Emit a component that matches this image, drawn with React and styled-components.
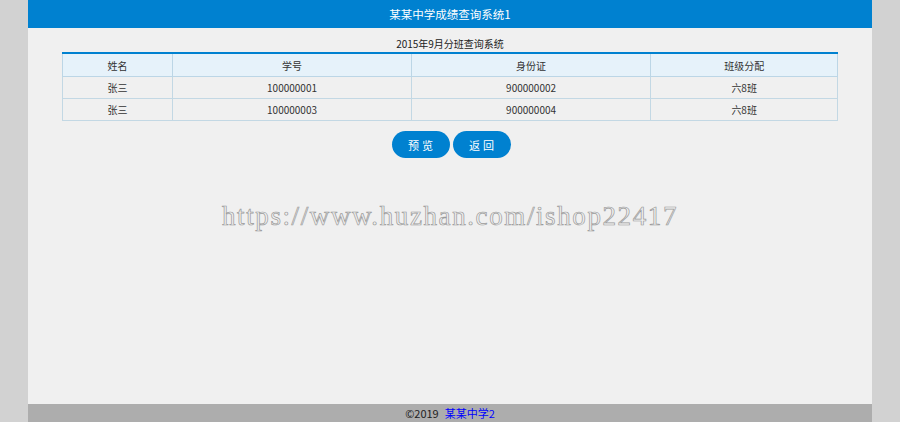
import React from "react";
import styled, { createGlobalStyle } from "styled-components";

const GlobalStyle = createGlobalStyle`
  html, body {
    margin: 0;
    padding: 0;
    height: 100%;
    background: #d2d2d2;
    font-family: "Noto Sans CJK SC", "Noto Sans", sans-serif;
  }
  #root {
    height: 100%;
  }
`;

const Page = styled.div`
  width: 844px;
  height: 100%;
  margin: 0 auto;
  background: #f0f0f0;
  display: flex;
  flex-direction: column;
`;

const Header = styled.div`
  height: 28px;
  background: #0081d0;
  color: #fff;
  font-size: 11.5px;
  display: flex;
  align-items: center;
  justify-content: center;
`;

const Main = styled.div`
  flex: 1;
  padding: 8px 34px 0;
  display: flex;
  flex-direction: column;
  align-items: center;
`;

const Caption = styled.div`
  font-size: 10px;
  line-height: 16px;
  color: #222;
`;

const Table = styled.table`
  width: 776px;
  border-collapse: collapse;
  border-top: 2px solid #0081d0;
  font-size: 10px;
  color: #333;
`;

const Th = styled.th`
  height: 22px;
  padding: 0;
  font-weight: normal;
  background: #e6f2fa;
  border: 1px solid #bcd6e6;
  border-top: none;
  width: ${(p) => p.w}px;
`;

const Td = styled.td`
  height: 21px;
  padding: 0;
  text-align: center;
  border: 1px solid #c3d8e4;
`;

const Actions = styled.div`
  display: flex;
  gap: 3px;
  margin-top: 10px;
  padding-left: 2px;
`;

const Button = styled.button`
  width: 58px;
  height: 27px;
  border: none;
  border-radius: 14px;
  background: #0081d0;
  color: #fff;
  font-family: inherit;
  font-size: 11px;
  letter-spacing: 3px;
  text-indent: 3px;
  cursor: pointer;
`;

const Mark = styled.div`
  margin-top: 40px;
  font-family: "Liberation Serif", serif;
  font-size: 27px;
  line-height: 36px;
  color: transparent;
  -webkit-text-stroke: 0.7px #9a9a9a;
  letter-spacing: 1.6px;
  white-space: nowrap;
`;

const Footer = styled.div`
  height: 18px;
  background: #adadad;
  font-size: 11px;
  color: #222;
  display: flex;
  align-items: center;
  justify-content: center;
  gap: 6px;

  a {
    color: #0000ff;
    text-decoration: none;
  }
`;

const rows = [
  { name: "张三", no: "100000001", id: "900000002", cls: "六8班" },
  { name: "张三", no: "100000003", id: "900000004", cls: "六8班" },
];

export default function App() {
  return (
    <>
      <GlobalStyle />
      <Page>
        <Header>某某中学成绩查询系统1</Header>
        <Main>
          <Caption>2015年9月分班查询系统</Caption>
          <Table>
            <thead>
              <tr>
                <Th w={110}>姓名</Th>
                <Th w={239}>学号</Th>
                <Th w={240}>身份证</Th>
                <Th w={187}>班级分配</Th>
              </tr>
            </thead>
            <tbody>
              {rows.map((r) => (
                <tr key={r.no}>
                  <Td>{r.name}</Td>
                  <Td>{r.no}</Td>
                  <Td>{r.id}</Td>
                  <Td>{r.cls}</Td>
                </tr>
              ))}
            </tbody>
          </Table>
          <Actions>
            <Button>预览</Button>
            <Button>返回</Button>
          </Actions>
          <Mark>https://www.huzhan.com/ishop22417</Mark>
        </Main>
        <Footer>
          <span>©2019</span>
          <a href="#">某某中学2</a>
        </Footer>
      </Page>
    </>
  );
}
